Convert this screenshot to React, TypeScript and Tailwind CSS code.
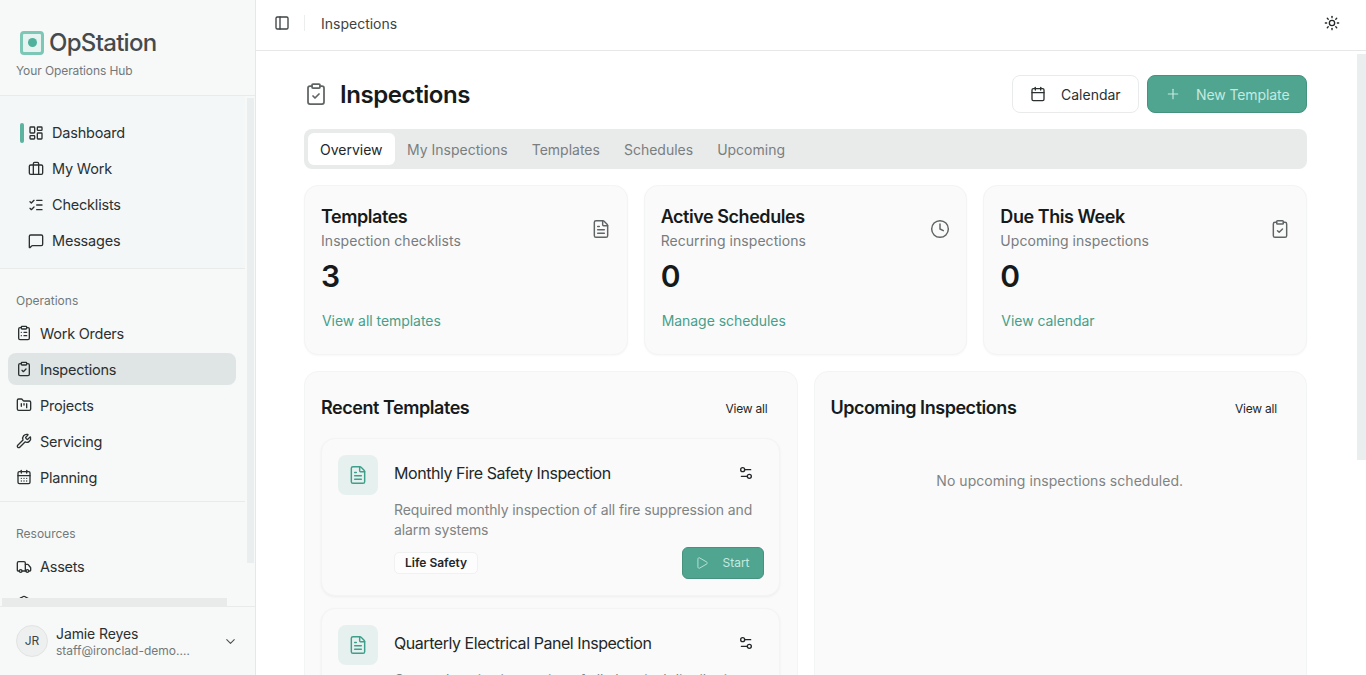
import {
  Briefcase,
  Calendar,
  CalendarDays,
  ChevronDown,
  ClipboardCheck,
  ClipboardList,
  Clock,
  FileText,
  FolderKanban,
  LayoutDashboard,
  ListChecks,
  MessageSquare,
  Package,
  PanelLeft,
  Play,
  Plus,
  Settings2,
  Sun,
  Truck,
  Wrench,
} from "lucide-react"

const TOP_NAV = [
  { label: "Dashboard", icon: LayoutDashboard, marked: true },
  { label: "My Work", icon: Briefcase },
  { label: "Checklists", icon: ListChecks },
  { label: "Messages", icon: MessageSquare },
]

const OPERATIONS_NAV = [
  { label: "Work Orders", icon: ClipboardList },
  { label: "Inspections", icon: ClipboardCheck, active: true },
  { label: "Projects", icon: FolderKanban },
  { label: "Servicing", icon: Wrench },
  { label: "Planning", icon: CalendarDays },
]

const TABS = ["Overview", "My Inspections", "Templates", "Schedules", "Upcoming"]

const STATS = [
  { title: "Templates", sub: "Inspection checklists", value: "3", link: "View all templates", icon: FileText },
  { title: "Active Schedules", sub: "Recurring inspections", value: "0", link: "Manage schedules", icon: Clock },
  { title: "Due This Week", sub: "Upcoming inspections", value: "0", link: "View calendar", icon: ClipboardCheck },
]

function Sidebar() {
  return (
    <aside className="relative flex h-full w-[256px] shrink-0 flex-col border-r border-[#e6e8e8] bg-[#f7f8f8]">
      <div className="h-[96px] shrink-0 border-b border-[#e9ebeb] pl-4 pt-[29px]">
        <div className="flex h-[27px] items-center gap-[5px] pl-1">
          <div className="flex size-[24px] items-center justify-center rounded-[4px] border-[3px] border-[#7cc7b6] bg-[#e6f3f0]">
            <div className="size-[9px] rounded-full bg-[#4fb09b]" />
          </div>
          <span className="text-[24px] font-medium leading-none tracking-[-0.7px] text-[#454b4c]">OpStation</span>
        </div>
        <p className="mt-[7px] text-[12px] leading-4 tracking-[-0.1px] text-[#73787a]">Your Operations Hub</p>
      </div>

      <div className="relative min-h-0 flex-1 overflow-hidden">
        <nav className="mr-[10px] h-[173px] border-b border-[#e9ebeb] bg-[#f4f7f8] pt-[19px]">
          {TOP_NAV.map(item => (
            <div key={item.label} className="flex h-[36px] items-center pl-[20px]">
              <span className={`h-[20px] w-[4px] rounded-full ${item.marked ? "bg-[#5bb3a0]" : ""}`} />
              <item.icon className="ml-[4px] size-[16px] text-[#2b3031]" strokeWidth={2} />
              <span className="ml-[8px] text-[14.5px] tracking-[-0.2px] text-[#2b3031]">{item.label}</span>
            </div>
          ))}
        </nav>

        <div className="mr-[10px] h-[233px] border-b border-[#e9ebeb] pt-[24px]">
          <p className="pl-4 text-[12px] leading-4 text-[#73787a]">Operations</p>
          <div className="mt-[8px] flex flex-col gap-[4px] pl-2">
            {OPERATIONS_NAV.map(item => (
              <div
                key={item.label}
                className={`flex h-[32px] w-[228px] items-center gap-[8px] rounded-lg pl-[8px] ${item.active ? "bg-[#dfe5e5]" : ""}`}
              >
                <item.icon className="size-[16px] text-[#2b3031]" strokeWidth={2} />
                <span className="pt-[2px] text-[14.5px] tracking-[-0.25px] text-[#2b3031]">{item.label}</span>
              </div>
            ))}
          </div>
        </div>

        <div className="pt-[24px]">
          <p className="pl-4 text-[12px] leading-4 text-[#73787a]">Resources</p>
          <div className="ml-2 mt-[9px] flex h-[32px] w-[228px] items-center gap-[8px] pl-[8px]">
            <Truck className="size-[16px] text-[#2b3031]" strokeWidth={2} />
            <span className="text-[14.5px] tracking-[-0.25px] text-[#2b3031]">Assets</span>
          </div>
          <div className="ml-2 mt-[4px] flex h-[32px] w-[228px] items-center pl-[8px]">
            <Package className="size-[16px] text-[#2b3031]" strokeWidth={2} />
          </div>
        </div>

        <div className="absolute right-[1px] top-[2px] h-[465px] w-[7px] bg-[#ebeeee]" />
        <div className="absolute bottom-0 left-[2px] h-[8px] w-[225px] bg-[#e9ebeb]" />
      </div>

      <div className="flex h-[69px] shrink-0 items-center border-t border-[#e9ebeb] pl-4 pr-[17px]">
        <div className="flex size-[32px] items-center justify-center rounded-full border border-[#e2e4e4] bg-[#eef0f0] text-[12px] text-[#3d4344]">
          JR
        </div>
        <div className="ml-2 min-w-0 flex-1">
          <p className="text-[14px] leading-[18px] tracking-[-0.1px] text-[#2b3031]">Jamie Reyes</p>
          <p className="w-[138px] truncate text-[12px] leading-[15px] text-[#73787a]">staff@ironclad-demo.com</p>
        </div>
        <ChevronDown className="size-[15px] text-[#4b5051]" strokeWidth={1.75} />
      </div>
    </aside>
  )
}

function StatCard({ stat }: { stat: (typeof STATS)[number] }) {
  return (
    <div className="relative h-[170px] rounded-[14px] border border-[#f3f4f4] bg-[#fafafa] pl-4 pt-[17px] shadow-[0_1px_2px_rgba(0,0,0,0.03)]">
      <h3 className="text-[18px] font-semibold leading-[28px] tracking-[-0.45px] text-[#171a1b]">{stat.title}</h3>
      <p className="text-[14px] leading-[20px] tracking-[0.05px] text-[#787c7e]">{stat.sub}</p>
      <p className="mt-[7px] text-[30px] font-semibold leading-[36px] text-[#171a1b]">{stat.value}</p>
      <p className="ml-px mt-[17px] text-[14px] leading-[20px] tracking-[-0.05px] text-[#479f8b]">{stat.link}</p>
      <stat.icon className="absolute right-[16px] top-[33px] size-[20px] text-[#5f6465]" strokeWidth={1.75} />
    </div>
  )
}

function TemplateCard({ title, description, tag }: { title: string; description: string; tag: string }) {
  return (
    <div className="relative rounded-[14px] border border-[#f3f4f4] bg-[#fafafa] pb-4 pl-4 pr-[15px] pt-4 shadow-[0_1px_3px_rgba(0,0,0,0.05)]">
      <div className="flex gap-4">
        <div className="flex size-[40px] shrink-0 items-center justify-center rounded-lg bg-[#e6f1ef]">
          <FileText className="size-[20px] text-[#3e9f8a]" strokeWidth={1.75} />
        </div>
        <div className="min-w-0 flex-1">
          <div className="flex h-[36px] items-center justify-between">
            <h4 className="text-[16px] font-normal tracking-[-0.45px] text-[#232728]">{title}</h4>
            <Settings2 className="mr-[10px] size-[16px] text-[#232728]" strokeWidth={2} />
          </div>
          <p className="mt-[9px] text-[14px] leading-[20px] tracking-[-0.1px] text-[#7f8384]">{description}</p>
          <div className="mt-[7px] flex items-center justify-between">
            <span className="flex h-[22px] items-center rounded-[5px] border border-[#f0f1f1] bg-[#fdfdfd] px-[10px] text-[12px] font-semibold text-[#232728]">
              {tag}
            </span>
            <button className="flex h-[32px] w-[82px] items-center justify-center gap-[13px] rounded-[6px] border border-[#45927f] bg-[#4fa590] text-[12px] text-[#c4eae0]">
              <Play className="size-[14px]" strokeWidth={1.5} />
              Start
            </button>
          </div>
        </div>
      </div>
    </div>
  )
}

export default function App() {
  return (
    <div
      className="flex h-screen w-full overflow-hidden bg-white"
      style={{ fontFamily: "Inter, 'Noto Sans', sans-serif" }}
    >
      <Sidebar />
      <div className="flex min-w-0 flex-1 flex-col">
        <header className="flex h-[51px] shrink-0 items-center border-b border-[#e6e8e8] pb-1 pl-[18px] pr-[26px]">
          <PanelLeft className="size-[16px] text-[#3d4344]" strokeWidth={2} />
          <span className="ml-[14px] h-[16px] w-px bg-[#eceeee]" />
          <span className="ml-[16px] text-[14px] text-[#3d4344]">Inspections</span>
          <Sun className="ml-auto size-[16px] text-[#232728]" strokeWidth={2} />
        </header>

        <main className="relative min-h-0 flex-1 overflow-hidden pl-12 pr-[59px] pt-[24px]">
          <div className="flex h-[38px] items-center">
            <ClipboardCheck className="size-[24px] text-[#5f6465]" strokeWidth={1.75} />
            <h1 className="ml-[12px] pt-[2px] text-[24px] font-semibold tracking-[-0.45px] text-[#171a1b]">Inspections</h1>
            <button className="ml-auto flex h-[38px] w-[127px] items-center gap-[15px] rounded-lg border border-[#e9ebeb] bg-white pl-[17px] text-[14px] text-[#2b3031]">
              <Calendar className="size-[16px]" strokeWidth={2} />
              Calendar
            </button>
            <button className="ml-2 flex h-[38px] w-[160px] items-center gap-[15px] rounded-lg border border-[#45927f] bg-[#4fa590] pl-[17px] text-[14px] tracking-[-0.1px] text-[#c4eae0]">
              <Plus className="size-[16px]" strokeWidth={1.75} />
              New Template
            </button>
          </div>

          <div className="mt-4 flex h-[40px] items-center rounded-lg bg-[#e9ebeb] px-1">
            {TABS.map((tab, index) => (
              <div
                key={tab}
                className={`flex h-[32px] items-center rounded-md px-3 text-[14px] ${index === 0 ? "w-[87px] bg-white text-[#232728]" : "text-[#7a7e80]"}`}
              >
                {tab}
              </div>
            ))}
          </div>

          <div className="mt-4 grid grid-cols-3 gap-4">
            {STATS.map(stat => (
              <StatCard key={stat.title} stat={stat} />
            ))}
          </div>

          <div className="mt-4 grid grid-cols-2 gap-4">
            <section className="h-[400px] rounded-[14px] border border-[#f3f4f4] bg-[#fafafa] pl-4 pr-[17px] pt-[21px]">
              <div className="flex h-[28px] items-center justify-between pr-[12px]">
                <h2 className="text-[18px] font-semibold tracking-[-0.45px] text-[#171a1b]">Recent Templates</h2>
                <span className="pt-[4px] text-[12px] tracking-[-0.2px] text-[#232728]">View all</span>
              </div>
              <div className="mt-[17px] flex flex-col gap-3">
                <TemplateCard
                  title="Monthly Fire Safety Inspection"
                  description="Required monthly inspection of all fire suppression and alarm systems"
                  tag="Life Safety"
                />
                <TemplateCard
                  title="Quarterly Electrical Panel Inspection"
                  description="Comprehensive inspection of all electrical distribution panels"
                  tag="Electrical"
                />
              </div>
            </section>
            <section className="h-[400px] rounded-[14px] border border-[#f3f4f4] bg-[#fafafa] pl-4 pr-[29px] pt-[21px]">
              <div className="flex h-[28px] items-center justify-between">
                <h2 className="text-[18px] font-semibold tracking-[-0.45px] text-[#171a1b]">Upcoming Inspections</h2>
                <span className="pt-[4px] text-[12px] tracking-[-0.2px] text-[#232728]">View all</span>
              </div>
              <p className="mt-[49px] pl-[12px] text-center text-[14px] tracking-[0.05px] text-[#7f8384]">
                No upcoming inspections scheduled.
              </p>
            </section>
          </div>

          <div className="absolute right-0 top-[3px] h-[406px] w-[9px] bg-[#ebeeee]" />
        </main>
      </div>
    </div>
  )
}
